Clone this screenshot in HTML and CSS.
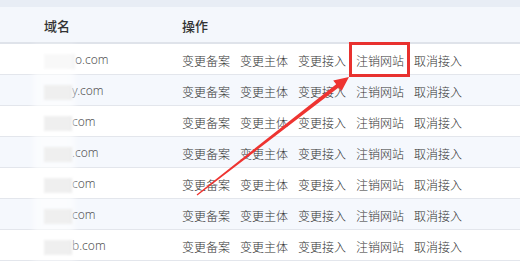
FILE: index.html
```html
<!DOCTYPE html>
<html lang="zh-CN">
<head>
<meta charset="UTF-8">
<title>域名列表</title>
<link rel="stylesheet" href="styles.css">
</head>
<body>
<div class="page">
    <div class="topbar"></div>
    <table class="list">
        <tr class="head"><th class="name">域名</th><th>操作</th></tr>
        <tr><td class="name"><span class="mask wide"></span>o.com</td><td class="ops"><a>变更备案</a><a>变更主体</a><a>变更接入</a><a class="hit">注销网站</a><a>取消接入</a></td></tr>
        <tr class="alt"><td class="name"><span class="mask"></span>y.com</td><td class="ops"><a>变更备案</a><a>变更主体</a><a>变更接入</a><a>注销网站</a><a>取消接入</a></td></tr>
        <tr><td class="name"><span class="mask"></span>com</td><td class="ops"><a>变更备案</a><a>变更主体</a><a>变更接入</a><a>注销网站</a><a>取消接入</a></td></tr>
        <tr class="alt"><td class="name"><span class="mask"></span>.com</td><td class="ops"><a>变更备案</a><a>变更主体</a><a>变更接入</a><a>注销网站</a><a>取消接入</a></td></tr>
        <tr><td class="name"><span class="mask"></span>com</td><td class="ops"><a>变更备案</a><a>变更主体</a><a>变更接入</a><a>注销网站</a><a>取消接入</a></td></tr>
        <tr class="alt"><td class="name"><span class="mask"></span>com</td><td class="ops"><a>变更备案</a><a>变更主体</a><a>变更接入</a><a>注销网站</a><a>取消接入</a></td></tr>
        <tr><td class="name"><span class="mask"></span>b.com</td><td class="ops"><a>变更备案</a><a>变更主体</a><a>变更接入</a><a>注销网站</a><a>取消接入</a></td></tr>
    </table>
    <div class="smudge"></div>
    <svg class="arrow" width="520" height="262" viewBox="0 0 520 262">
        <polygon points="196.6,194.4 336.2,84.2 333.2,80.6 349,77 341.6,91 338.6,87.4 197.4,195.6" fill="#ee3431"/>
    </svg>
</div>
</body>
</html>
```

FILE: styles.css
```css
body {
    margin: 0;
    background: #fff;
    font-family: "Noto Sans CJK SC", "Noto Sans", sans-serif;
    font-size: 12px;
    color: #333;
}
.page {
    position: relative;
    width: 520px;
    height: 262px;
    overflow: hidden;
}
.topbar {
    height: 7px;
    background: #e8edf5;
}
.list {
    width: 100%;
    border-collapse: collapse;
    table-layout: fixed;
}
.list th, .list td {
    padding: 0;
    text-align: left;
    white-space: nowrap;
}
.list .head {
    background: #f4f7fc;
    height: 36px;
    border-bottom: 2px solid #dfe3ea;
}
.list th {
    font-weight: 500;
    font-size: 13px;
    color: #333;
    padding-top: 2px;
}
.list th.name, .list td.name {
    width: 138px;
    padding-left: 44px;
}
.list td {
    height: 28px;
    padding-top: 2px;
    border-bottom: 1px solid #e3e6ec;
}
.list .alt {
    background: #f5f8fd;
}
.list td.name {
    color: #555;
    font-family: "Noto Sans", sans-serif;
    font-weight: 300;
}
.mask {
    display: inline-block;
    width: 28px;
    height: 15px;
    vertical-align: middle;
    background: #dcdcdc;
    filter: blur(1px);
}
.mask.wide {
    width: 31px;
    background: #f0f0f0;
}
.ops a {
    display: inline-block;
    margin-right: 10px;
    color: #333;
    font-weight: 300;
}
.ops a.hit {
    position: relative;
}
.ops a.hit::after {
    content: "";
    position: absolute;
    left: -7px;
    right: -6px;
    top: -10px;
    bottom: -8px;
    border: 3px solid #e8312f;
}
.smudge {
    position: absolute;
    left: 33px;
    top: 45px;
    width: 42px;
    height: 217px;
    background: rgba(255, 255, 255, 0.55);
    filter: blur(3px);
}
.arrow {
    position: absolute;
    left: 0;
    top: 0;
}
```
